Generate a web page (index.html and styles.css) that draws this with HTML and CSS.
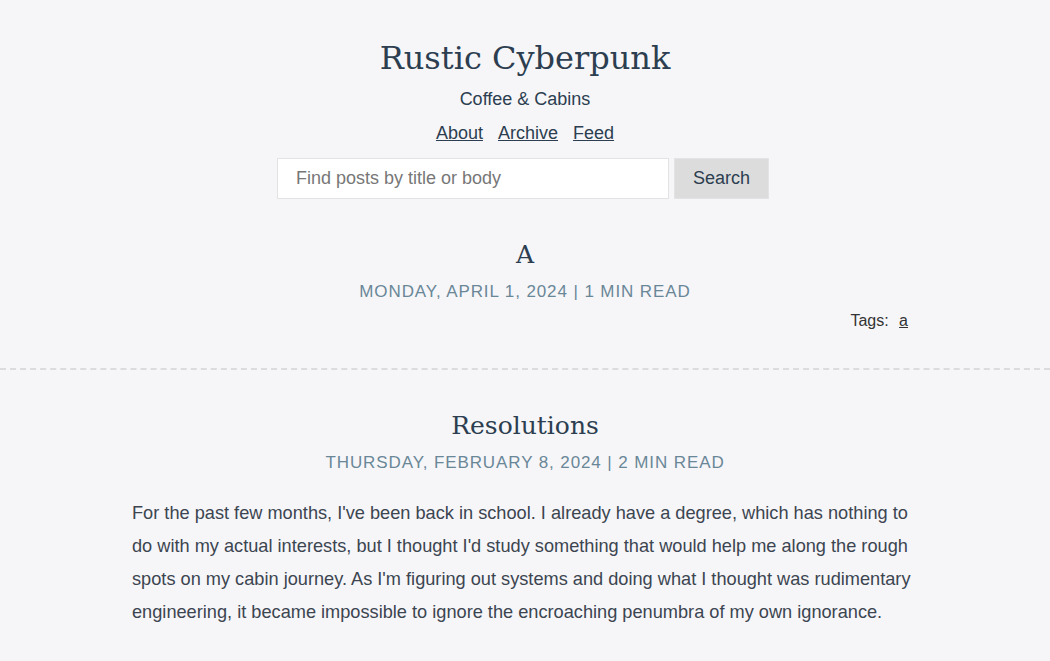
FILE: index.html
```html
<!DOCTYPE html>
<html lang="en">

<head>
    <meta charset="UTF-8">
    <meta name="viewport" content="width=device-width, initial-scale=1.0">
    <title>Rustic Cyberpunk</title>
    <link rel="stylesheet" href="styles.css">
</head>

<body>
    <header class="site-header">
        <h1 class="site-title">Rustic Cyberpunk</h1>
        <p class="site-tagline">Coffee &amp; Cabins</p>
        <nav class="site-nav">
            <a href="#">About</a>
            <a href="#">Archive</a>
            <a href="#">Feed</a>
        </nav>
        <form class="search" onsubmit="return false">
            <input class="search-input" type="text" placeholder="Find posts by title or body">
            <button class="search-button" type="submit">Search</button>
        </form>
    </header>

    <main>
        <article class="post">
            <div class="post-inner">
                <h2 class="post-title">A</h2>
                <p class="post-meta">Monday, April 1, 2024 | 1 min read</p>
                <p class="post-tags">Tags: <a href="#">a</a></p>
            </div>
        </article>

        <article class="post">
            <div class="post-inner">
                <h2 class="post-title">Resolutions</h2>
                <p class="post-meta">Thursday, February 8, 2024 | 2 min read</p>
                <p class="post-body">For the past few months, I've been back in school. I already have a degree, which has nothing to do with my actual interests, but I thought I'd study something that would help me along the rough spots on my cabin journey. As I'm figuring out systems and doing what I thought was rudimentary engineering, it became impossible to ignore the encroaching penumbra of my own ignorance.</p>
            </div>
        </article>
    </main>
</body>

</html>
```

FILE: styles.css
```css
* {
    margin: 0;
    padding: 0;
    box-sizing: border-box;
}

body {
    background-color: #f6f6f9;
    color: #2c3e50;
    font-family: "Liberation Sans", Arial, sans-serif;
}

.site-header {
    text-align: center;
    padding-top: 37px;
}

.site-title {
    font-family: "DejaVu Serif", Georgia, serif;
    font-weight: normal;
    font-size: 32px;
    line-height: 42px;
}

.site-tagline {
    font-size: 18px;
    margin-top: 10px;
}

.site-nav {
    margin-top: 13px;
    font-size: 18px;
}

.site-nav a {
    color: #2c3e50;
    margin: 0 5px;
}

.search {
    display: flex;
    justify-content: center;
    gap: 5px;
    margin-top: 14px;
    padding-right: 4px;
}

.search-input {
    width: 392px;
    height: 41px;
    border: 1px solid #e3e3e6;
    background: #fff;
    padding: 0 18px;
    font-size: 18px;
    font-family: inherit;
    color: #333;
}

.search-input::placeholder {
    color: #777;
}

.search-button {
    width: 95px;
    height: 41px;
    border: 1px solid #e3e3e6;
    background: #dcdcdc;
    font-size: 18px;
    font-family: inherit;
    color: #2c3e50;
}

.post {
    padding: 39px 0 38px;
    border-bottom: 2px dashed #dcdcdf;
}

.post:last-child {
    border-bottom: 0;
}

.post-inner {
    width: 786px;
    margin: 0 auto;
}

.post-title {
    font-family: "DejaVu Serif", Georgia, serif;
    font-weight: normal;
    font-size: 25px;
    text-align: center;
    line-height: 34px;
}

.post-meta {
    text-align: center;
    text-transform: uppercase;
    letter-spacing: 0.9px;
    color: #6a8797;
    font-size: 17px;
    margin-top: 10px;
}

.post-tags {
    text-align: right;
    font-size: 16px;
    color: #333;
    margin-top: 10px;
    padding-right: 10px;
}

.post-tags a {
    color: #333;
    margin-left: 6px;
}

.post-body {
    font-size: 18.2px;
    line-height: 33px;
    color: #3c4550;
    margin-top: 24px;
}
```
